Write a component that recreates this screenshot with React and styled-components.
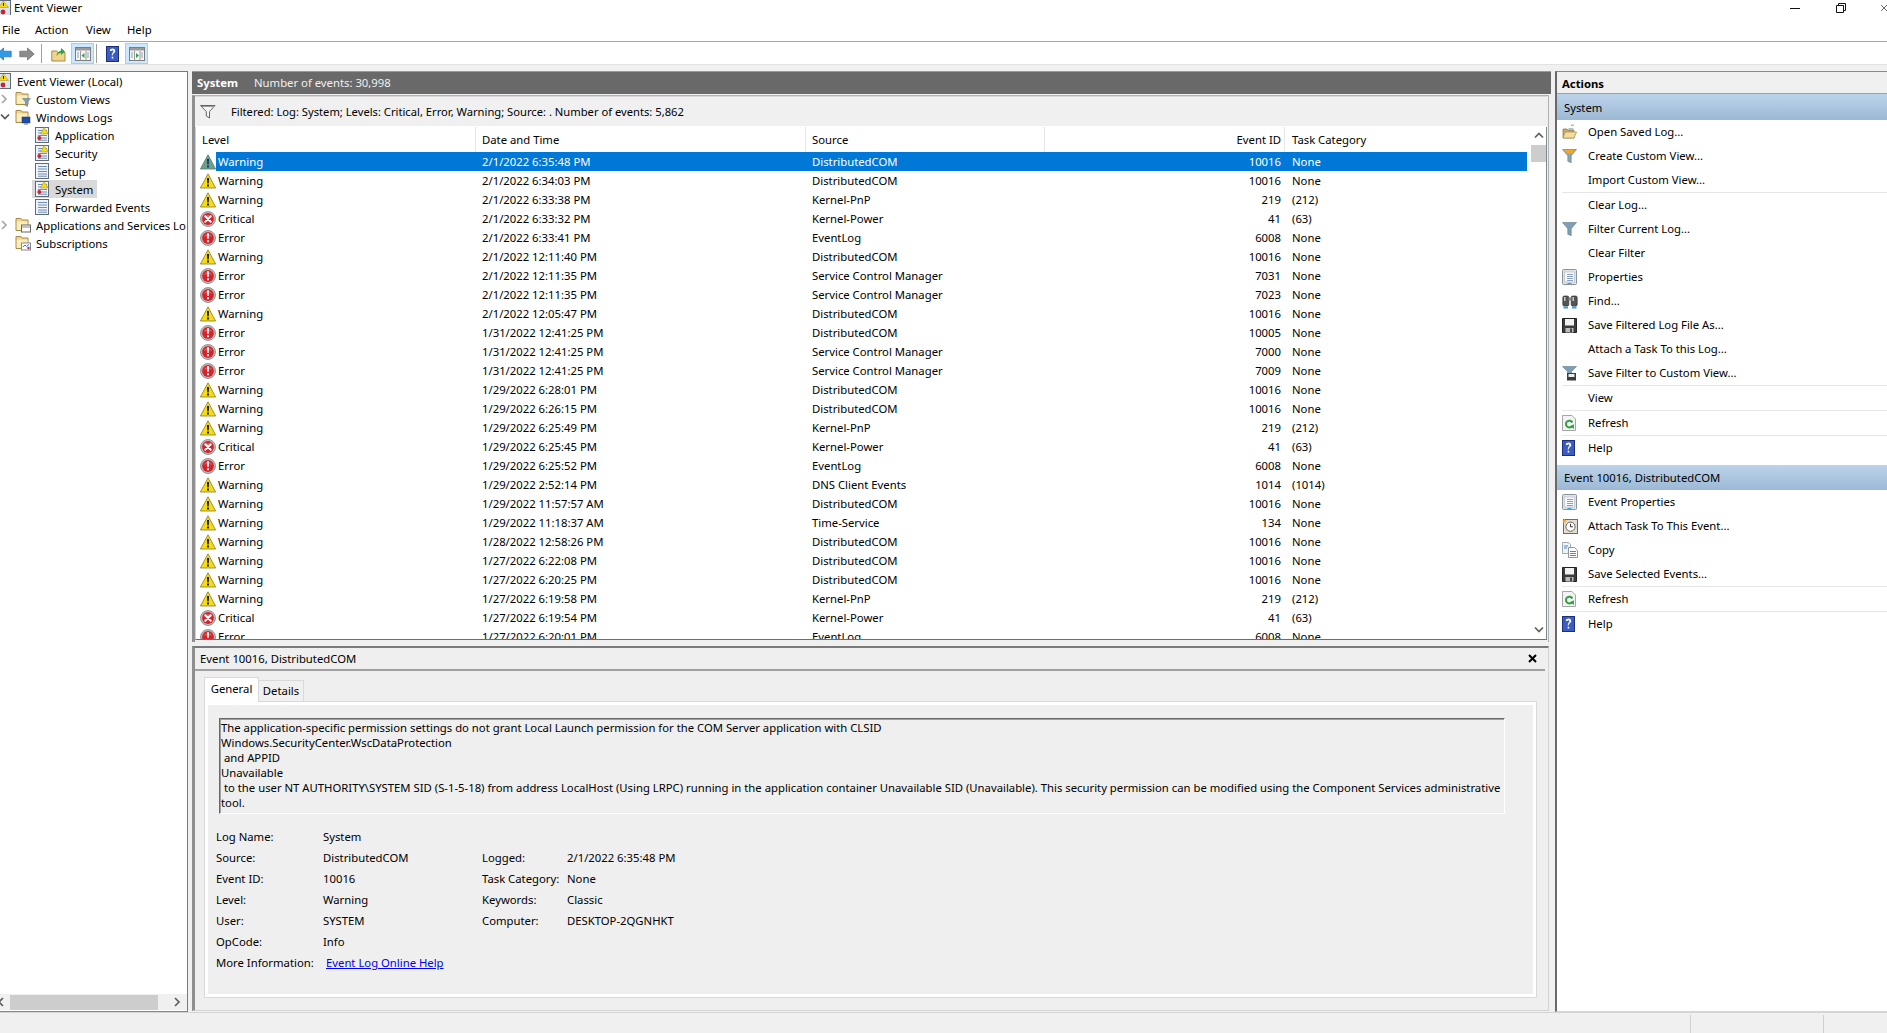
import React from 'react';
import styled, { createGlobalStyle } from 'styled-components';

const Global = createGlobalStyle`
  html, body { margin: 0; padding: 0; height: 100%; overflow: hidden; background: #f0f0f0; }
  #root { height: 100%; }
  * { box-sizing: border-box; }
  body { font-family: "Noto Sans", "Liberation Sans", sans-serif; font-size: 11.3px; color: #000; }
`;

const Frame = styled.div`display: flex; flex-direction: column; height: 1033px; width: 1887px; overflow: hidden; background: #f0f0f0;`;
const TitleBar = styled.div`height: 15px; background: #fff; display: flex; align-items: center; padding-left: 0; overflow: hidden;`;
const TitleIcon = styled.span`display: flex; width: 14px; flex: none; overflow: hidden; justify-content: flex-start;`;
const TitleText = styled.span`flex: 1;`;
const WinButtons = styled.div`display: flex; align-items: center; height: 15px;`;
const WinBtn = styled.span`display: flex; width: ${p => p.$w}px; justify-content: ${p => p.$start ? 'flex-start' : 'center'}; padding-left: ${p => p.$start ? 17 : 0}px; overflow: hidden;`;
const MenuBar = styled.div`height: 27px; background: #fff; border-bottom: 1px solid #a8a8a8; display: flex; align-items: center; padding: 2px 0 0 2px;`;
const MenuItem = styled.span`width: ${p => p.$w}px;`;
const Toolbar = styled.div`height: 23px; background: #fff; border-bottom: 1px solid #e2e2e2; display: flex; align-items: center; padding-top: 1px;`;
const ToolIcon = styled.span`display: flex; align-items: center; justify-content: center; flex: none; width: ${p => p.$w}px; height: 21px; margin-left: ${p => p.$ml || 0}px;
  ${p => p.$on ? 'background:#cce8ff; border:1px solid #99d1ff;' : ''}`;
const ToolSep = styled.span`width: 1px; height: 19px; background: #a0a0a0; flex: none; margin-left: ${p => p.$ml}px;`;
const Workspace = styled.div`flex: 1; min-height: 0; display: flex; padding-top: 6px;`;
const StatusBar = styled.div`height: 21px; border-top: 1px solid #d4d4d4; background: #f0f0f0; display: flex; padding-top: 2px; padding-left: 1690px;`;
const StatusCell = styled.div`width: ${p => p.$w}px; border-left: 1px solid #d0d0d0;`;

const LeftPane = styled.div`width: 188px; flex: none; background: #fff; display: flex; flex-direction: column; border-top: 1px solid #7a7a7a; border-right: 1px solid #7a7a7a; border-bottom: 1px solid #7f8a8f;`;
const Tree = styled.div`flex: 1; overflow: hidden;`;
const TreeRow = styled.div`height: 18px; display: flex; align-items: center; white-space: nowrap; padding-left: ${p => p.$pad}px;`;
const Arrow = styled.span`width: 15px; flex: none; display: flex; align-items: center;`;
const TreeIcon = styled.span`display: flex; flex: none; width: ${p => p.$w || 18}px;`;
const SelectedGroup = styled.span`display: flex; align-items: center; height: 18px; padding-left: 3px; padding-right: 4px; margin-left: -3px; ${p => p.$sel ? 'background:#d9d9d9;' : ''}`;
const HScroll = styled.div`height: 16px; margin-bottom: 1px; flex: none; background: #f0f0f0; display: flex; align-items: center;`;
const HThumb = styled.div`width: 148px; height: 15px; background: #cdcdcd; flex: none;`;
const HArrow = styled.span`display: flex; flex: ${p => p.$grow ? 1 : 'none'}; width: ${p => p.$w}px; overflow: hidden; justify-content: ${p => p.$grow ? 'flex-end' : 'flex-start'}; padding-right: ${p => p.$grow ? 4 : 0}px;`;
const HLeftChevron = styled.span`display: flex; margin-left: -3px;`;

const Center = styled.div`width: 1359px; flex: none; margin-left: 4px; display: flex; flex-direction: column;`;
const CenterHead = styled.div`height: 23px; background: #696969; color: #fff; display: flex; align-items: center; padding: 0 0 2px 5px; border-top: 1px solid #9a9a9a; flex: none;`;
const HeadName = styled.b`width: 57px; font-weight: 700;`;
const HeadCount = styled.span`color: #f0f0f0;`;
const EventsPane = styled.div`margin-top: 1px; width: 1357px; height: 547px; border: 1px solid #b0b0b0; border-left: 3px solid #8f8f8f; border-bottom: none; display: flex; flex-direction: column; flex: none; padding-right: 1px;`;
const FilterBar = styled.div`height: 31px; flex: none; display: flex; align-items: center; background: #f0f0f0; padding: 0 0 1px 5px; border-top: 1px solid #d8d8d8; border-bottom: 1px solid #fff;`;
const FilterText = styled.span`margin-left: 15px; font-size: 11.2px;`;
const TableBox = styled.div`height: 513px; flex: none; background: #fff; border-right: 1px solid #7f8a8f; border-bottom: 1px solid #6e6e6e; border-left: 1px solid #d0d0d0; display: flex; overflow: hidden;`;
const TableMain = styled.div`flex: 1; min-width: 0; overflow: hidden;`;
const Grid = styled.div`display: grid; grid-template-columns: 280px 330px 239px 240px 1fr; height: ${p => p.$h}px; align-items: center;`;
const HeadCell = styled.div`height: 25px; display: flex; align-items: center; padding-left: ${p => p.$last ? 7 : 6}px; border-right: ${p => p.$last ? 'none' : '1px solid #e5e5e5'}; ${p => p.$right ? 'justify-content:flex-end; padding-right:3px;' : ''}`;
const Row = styled(Grid)`color: ${p => p.$sel ? '#fff' : '#000'};`;
const LevelCell = styled.div`display: flex; align-items: center; height: 19px; padding-left: 4px;`;
const LevelText = styled.span`flex: 1; height: 19px; line-height: 19px; padding-left: 2px; ${p => p.$sel ? 'background:#0078d7;' : ''}`;
const Cell = styled.div`height: 19px; line-height: 19px; padding-left: ${p => p.$last ? 7 : 6}px; white-space: nowrap; ${p => p.$right ? 'text-align:right; padding-right:4px;' : ''} ${p => p.$sel ? 'background:#0078d7;' : ''}`;
const VScroll = styled.div`width: 19px; flex: none; background: #fff; display: flex; flex-direction: column; align-items: flex-end; padding-left: 4px;`;
const VArrow = styled.div`height: ${p => p.$h}px; width: 15px; display: flex; align-items: center; justify-content: center;`;
const VThumb = styled.div`height: 17px; width: 15px; background: #cdcdcd;`;
const VSpacer = styled.div`flex: 1;`;

const Detail = styled.div`margin-top: 4px; width: 1357px; flex: 1; min-height: 0; margin-bottom: 1px; background: #efefef; border: 1px solid #d4d4d4; border-top: 2px solid #7a7a7a; border-left: 3px solid #8f8f8f; display: flex; flex-direction: column; padding: 0 3px 0 0;`;
const DetailTitle = styled.div`height: 23px; flex: none; display: flex; align-items: center; justify-content: space-between; padding: 0 8px 0 5px; border-bottom: 2px solid #a0a0a0;`;
const Tabs = styled.div`display: flex; align-items: flex-end; height: 31px; padding-left: 9px; flex: none; position: relative; z-index: 1; margin-bottom: -1px;`;
const Tab = styled.div`display: flex; align-items: center; justify-content: center; width: ${p => p.$w}px; height: ${p => p.$on ? 25 : 22}px; border: 1px solid #d9d9d9; ${p => p.$on ? 'border-bottom:none; background:#fff; padding-bottom:4px;' : 'border-left:none; background:#f0f0f0; padding-bottom:1px;'}`;
const TabPanel = styled.div`margin: 0 8px 12px 9px; flex: 1; min-height: 0; border: 1px solid #d9d9d9; background: #efefef; box-shadow: inset 0 0 0 3px #fff; padding: 16px 31px 0 14px;`;
const MessageBox = styled.div`height: 96px; border-top: 1px solid #696969; border-left: 1px solid #696969; border-right: 1px solid #fff; border-bottom: 1px solid #fff; padding: 1px 0 0 1px; line-height: 15px; box-shadow: inset 0 1px 0 #a0a0a0, inset 1px 0 0 #a0a0a0;`;
const MessageLine = styled.div`white-space: pre; height: 15px;`;
const InfoGrid = styled.div`margin: 12px 0 0 -3px; display: grid; grid-template-columns: 107px 159px 85px 1fr; grid-auto-rows: 21px; align-items: center;`;
const Link = styled.a`color: #0000ff; text-decoration: underline; margin-left: 3px;`;

const RightPane = styled.div`flex: 1; margin-left: 4px; border-left: 2px solid #696969; border-top: 1px solid #8a8a8a; border-bottom: 1px solid #d4d4d4; background: #fff; display: flex; flex-direction: column; min-width: 0;`;
const ActionsHead = styled.div`height: 22px; flex: none; background: #f0f0f0; border-bottom: 1px solid #a0a0a0; display: flex; align-items: center; padding: 2px 0 0 5px; font-weight: 700;`;
const Band = styled.div`height: ${p => p.$h}px; flex: none; display: flex; align-items: center; padding-left: 7px; background: linear-gradient(#bcd4ea, #9cb8d5); margin-top: ${p => p.$mt || 0}px;`;
const ActionRow = styled.div`height: 24px; flex: none; display: flex; align-items: center; padding-left: 5px;`;
const ActionIcon = styled.span`display: flex; width: 26px; flex: none;`;
const ActionLabel = styled.span`padding-bottom: 2px;`;
const ActionSep = styled.div`height: 1px; flex: none; margin-left: 5px; background: #e6e6e6;`;

const Warn = ({ sel }) => (
  <svg width="16" height="16" viewBox="0 0 16 16">
    <path d="M8 .8 15.6 15H.4z" fill={sel ? '#6f9e8a' : '#f7dc12'} stroke={sel ? '#4e7f70' : '#8a7a20'} strokeWidth=".8" strokeLinejoin="round" />
    <path d="M7 5h2l-.3 5.5H7.3zM7.1 11.6h1.8v1.8H7.1z" fill={sel ? '#0a3566' : '#111'} />
  </svg>
);
const Circle = ({ children }) => (
  <svg width="16" height="16" viewBox="0 0 16 16">
    <circle cx="8" cy="8" r="7.5" fill="#bdbdbd" stroke="#777" strokeWidth=".7" />
    <circle cx="8" cy="8" r="5.9" fill="#d3242b" />
    <path d="M3.5 6.5A5 5 0 0 1 12.5 6.5z" fill="#e8686c" opacity=".7" />
    {children}
  </svg>
);
const Crit = () => <Circle><path d="M5.3 5.3l5.4 5.4M10.7 5.3l-5.4 5.4" stroke="#fff" strokeWidth="2" strokeLinecap="round" /></Circle>;
const Err = () => <Circle><path d="M7 3.3h2L8.7 9H7.3zM7.1 10.3h1.8v1.9H7.1z" fill="#fff" /></Circle>;
const LevelIcon = ({ level, sel }) => level === 'Warning' ? <Warn sel={sel} /> : level === 'Critical' ? <Crit /> : <Err />;

const Sheet = ({ alert }) => (
  <svg width="15" height="16" viewBox="0 0 15 16">
    <rect x=".5" y=".5" width="13" height="15" fill="#eef3fa" stroke="#5f6b7a" />
    <path d="M3 3.5h9M3 6h9M3 8.5h9M3 11h9M3 13.2h9" stroke="#6f8db5" />
    {alert && <><path d="M9 .5l4.5 6.5h-8z" fill="#f7dc12" stroke="#a08a10" strokeWidth=".5" /><circle cx="4.3" cy="11" r="2" fill="#c8262c" /></>}
  </svg>
);
const FolderBase = ({ children }) => (
  <svg width="16" height="16" viewBox="0 0 16 16">
    <path d="M1 1.5h5l1 1.5h6v10.5H1z" fill="#f0d48a" stroke="#a68a4a" />
    <path d="M1.8 4.5h10.6v8.3H1.8z" fill="#fbeebd" />
    {children}
  </svg>
);
const FolderFilter = () => <FolderBase><path d="M7.5 7.5h8l-3 3.4V15.5l-2-1v-3.6z" fill="#7f9fb5" stroke="#55727f" strokeWidth=".5" /></FolderBase>;
const FolderLogs = () => <FolderBase><rect x="7" y="8" width="8" height="6" fill="#1b4fb4" stroke="#333" strokeWidth=".5" /><path d="M9 14.5h4v1H9z" fill="#777" /></FolderBase>;
const FolderWin = () => <FolderBase><rect x="6.5" y="8" width="9" height="7" fill="#fff" stroke="#666" /><path d="M6.5 10h9" stroke="#888" /></FolderBase>;
const FolderSub = () => <FolderBase><rect x="6.5" y="8" width="9" height="7" fill="#fff" stroke="#889" /><path d="M8 12l2-2 1.5 1.5L14 9.5" stroke="#3a78c8" fill="none" /><circle cx="13.5" cy="13" r="1.2" fill="#c8262c" /></FolderBase>;
const LogRoot = () => (
  <svg width="11" height="16" viewBox="4 0 11 16">
    <rect x=".5" y=".5" width="14" height="15" fill="#dbe5f1" stroke="#5f6b7a" />
    <path d="M7.5 1l5 6.5h-10z" fill="#f7dc12" stroke="#a08a10" strokeWidth=".5" />
    <path d="M7 3h1v3H7z" fill="#222" />
    <circle cx="7" cy="12" r="2.4" fill="#c8262c" />
  </svg>
);
const Chevron = ({ dir, color = '#a6a6a6' }) => {
  const d = { right: 'M2 1l4 4-4 4', down: 'M1 2.5l4 4 4-4', left: 'M6 1L2 5l4 4', up: 'M1 6.5l4-4 4 4' }[dir];
  return <svg width="10" height="10" viewBox="0 0 10 10"><path d={d} fill="none" stroke={color} strokeWidth="1.7" /></svg>;
};
const HelpIcon = () => (
  <svg width="13" height="16" viewBox="0 0 13 16">
    <rect x=".5" y=".5" width="12" height="15" fill="#3a5cc4" stroke="#1b2f7a" />
    <path d="M3.8 5c0-3.2 5.4-3.2 5.4 0 0 2-2.3 2-2.5 4.4H5.8C5.8 6.5 7.4 6.5 7.4 5c0-1-1.9-1-2 0zM5.7 10.8h1.6v1.8H5.7z" fill="#fff" />
  </svg>
);
const Funnel = ({ fill = '#7e9fb5', top }) => (
  <svg width="16" height="16" viewBox="0 0 16 16">
    <path d="M.5 1.5h14l-5.3 6.2v7l-3.4-1.5V7.7z" fill={fill} stroke="#617a88" strokeWidth=".6" />
    {top && <path d="M2 2h11l-3 3.5H5z" fill={top} />}
  </svg>
);
const FilterOutline = () => (
  <svg width="16" height="16" viewBox="0 0 16 16">
    <path d="M.5 2.5h14.5L9.5 8.5v6.5l-3.2-2V8.5z" fill="#f6f6f6" stroke="#555" strokeWidth=".9" />
    <path d="M2 3.5h11" stroke="#999" />
  </svg>
);
const Binoculars = () => (
  <svg width="16" height="16" viewBox="0 0 16 16">
    <rect x=".8" y="3" width="6" height="10" rx="1.5" fill="#555" stroke="#222" strokeWidth=".6" />
    <rect x="9.2" y="3" width="6" height="10" rx="1.5" fill="#555" stroke="#222" strokeWidth=".6" />
    <rect x="6.5" y="4.5" width="3" height="3" fill="#888" />
    <path d="M1.5 13.5h4.5v2H1.5zM10 13.5h4.5v2H10z" fill="#3f9ae0" />
    <path d="M2 4h1.5v4H2zM10.5 4H12v4h-1.5z" fill="#c8c8c8" />
  </svg>
);
const Floppy = () => (
  <svg width="15" height="16" viewBox="0 0 15 16">
    <path d="M.5 1.5h14v14H.5z" fill="#3c3c3c" stroke="#222" />
    <rect x="3" y="2" width="9" height="6.5" fill="#f2f2f2" />
    <rect x="3.5" y="11" width="8" height="4.5" fill="#bdbdbd" />
    <rect x="8" y="11.5" width="2" height="3.5" fill="#444" />
  </svg>
);
const SaveFilter = () => (
  <svg width="16" height="16" viewBox="0 0 16 16">
    <path d="M.5 1.5h14l-5 5v3H5.5v-3z" fill="#7e9fb5" stroke="#617a88" strokeWidth=".6" />
    <path d="M5 8h9v7.5H5z" fill="#3c3c3c" />
    <rect x="6.5" y="9" width="6" height="3" fill="#eee" />
  </svg>
);
const Props = () => (
  <svg width="15" height="16" viewBox="0 0 15 16">
    <rect x=".5" y=".5" width="14" height="15" rx="1" fill="#dde3ea" stroke="#8b939c" />
    <rect x="2.5" y="3" width="10" height="10" fill="#f7f8fa" stroke="#b0b8c0" strokeWidth=".6" />
    <path d="M5 5.5h6M5 7.5h6M5 9.5h6M5 11.5h6" stroke="#8aa3c4" />
    <path d="M5.5 14.5h4" stroke="#3fa5e0" strokeWidth="1.2" />
  </svg>
);
const Refresh = () => (
  <svg width="14" height="16" viewBox="0 0 14 16">
    <path d="M.5.5H10l3.5 3.5v11.5H.5z" fill="#f3f3f3" stroke="#a5a5a5" />
    <path d="M10 11.2A3.4 3.4 0 1 1 10.4 7.5" fill="none" stroke="#2f9e3f" strokeWidth="2" />
    <path d="M7.8 11.5l4.2 2.2-.2-4.5z" fill="#2f9e3f" />
  </svg>
);
const OpenLog = () => (
  <svg width="15" height="16" viewBox="0 0 15 16">
    <path d="M1 5h4l1 1.3h6V14H1z" fill="#cdaa64" stroke="#8a7038" strokeWidth=".7" />
    <path d="M3 8h11.5L12 14H1z" fill="#f2dc9e" stroke="#a68a4a" strokeWidth=".7" />
    <path d="M9 1.2h3" stroke="#4fd04f" />
    <path d="M6.5 5h5" stroke="#7fa8cf" strokeWidth="1.4" />
  </svg>
);
const Task = () => (
  <svg width="16" height="16" viewBox="0 0 16 16">
    <rect x="1.5" y="1.5" width="14" height="14" fill="#e6ddd0" stroke="#7a6a55" />
    <circle cx="8.5" cy="8.7" r="4.6" fill="#fff" stroke="#66645e" />
    <path d="M8.5 5.8v3h2.4" fill="none" stroke="#333" />
    <path d="M2.5.5l.7 1.5 1.6.2-1.2 1.1.3 1.6-1.4-.8-1.4.8.3-1.6L.2 2.2l1.6-.2z" fill="#f5a623" />
  </svg>
);
const Copy = () => (
  <svg width="16" height="16" viewBox="0 0 16 16">
    <path d="M.5.5h6l2 2v9h-8z" fill="#eef3fa" stroke="#a0a8b4" />
    <path d="M6.5 5.5h6l3 3v7h-9z" fill="#fff" stroke="#8c96a3" />
    <path d="M8 9.5h6M8 11.5h6M8 13.5h6M2 4h4M2 6h3" stroke="#4f86c6" />
  </svg>
);
const NavArrow = ({ color, stroke, flip }) => (
  <svg width="16" height="14" viewBox="0 0 16 14" style={flip ? { transform: 'scaleX(-1)' } : undefined}>
    <path d="M.8 7 7.5 1v3.2h7.7v5.6H7.5V13z" fill={color} stroke={stroke} strokeWidth=".7" />
  </svg>
);
const PaneIcon = ({ flip }) => (
  <svg width="16" height="14" viewBox="0 0 16 14">
    <rect x=".5" y=".5" width="15" height="13" fill="#f5f5f5" stroke="#7d7d7d" />
    <path d="M1 1h14v2.5H1z" fill="#9a9a9a" />
    <path d="M5.5 4v9.5M11 4v9.5" stroke="#9a9a9a" />
    <path d="M2 6h2M2 8h2M2 10h2M12 6h2M12 8h2M12 10h2" stroke="#8aa0b8" />
    <path d={flip ? 'M7 6l3 2.5L7 11z' : 'M9.5 6l-3 2.5 3 2.5z'} fill="#22a84a" />
  </svg>
);
const UpFolder = () => (
  <svg width="15" height="16" viewBox="0 0 15 16">
    <path d="M.8 5h5l1 1.5H14V15H.8z" fill="#f0d48a" stroke="#a68a4a" />
    <path d="M5 10c1-3 3-5 5-5.5V2l4 3.5L10 9V6.8C8 7.5 6.5 8.5 5 10z" fill="#2fa24a" />
  </svg>
);

const rows = [
  ['Warning','2/1/2022 6:35:48 PM','DistributedCOM','10016','None'],
  ['Warning','2/1/2022 6:34:03 PM','DistributedCOM','10016','None'],
  ['Warning','2/1/2022 6:33:38 PM','Kernel-PnP','219','(212)'],
  ['Critical','2/1/2022 6:33:32 PM','Kernel-Power','41','(63)'],
  ['Error','2/1/2022 6:33:41 PM','EventLog','6008','None'],
  ['Warning','2/1/2022 12:11:40 PM','DistributedCOM','10016','None'],
  ['Error','2/1/2022 12:11:35 PM','Service Control Manager','7031','None'],
  ['Error','2/1/2022 12:11:35 PM','Service Control Manager','7023','None'],
  ['Warning','2/1/2022 12:05:47 PM','DistributedCOM','10016','None'],
  ['Error','1/31/2022 12:41:25 PM','DistributedCOM','10005','None'],
  ['Error','1/31/2022 12:41:25 PM','Service Control Manager','7000','None'],
  ['Error','1/31/2022 12:41:25 PM','Service Control Manager','7009','None'],
  ['Warning','1/29/2022 6:28:01 PM','DistributedCOM','10016','None'],
  ['Warning','1/29/2022 6:26:15 PM','DistributedCOM','10016','None'],
  ['Warning','1/29/2022 6:25:49 PM','Kernel-PnP','219','(212)'],
  ['Critical','1/29/2022 6:25:45 PM','Kernel-Power','41','(63)'],
  ['Error','1/29/2022 6:25:52 PM','EventLog','6008','None'],
  ['Warning','1/29/2022 2:52:14 PM','DNS Client Events','1014','(1014)'],
  ['Warning','1/29/2022 11:57:57 AM','DistributedCOM','10016','None'],
  ['Warning','1/29/2022 11:18:37 AM','Time-Service','134','None'],
  ['Warning','1/28/2022 12:58:26 PM','DistributedCOM','10016','None'],
  ['Warning','1/27/2022 6:22:08 PM','DistributedCOM','10016','None'],
  ['Warning','1/27/2022 6:20:25 PM','DistributedCOM','10016','None'],
  ['Warning','1/27/2022 6:19:58 PM','Kernel-PnP','219','(212)'],
  ['Critical','1/27/2022 6:19:54 PM','Kernel-Power','41','(63)'],
  ['Error','1/27/2022 6:20:01 PM','EventLog','6008','None'],
];

const systemActions = [
  ['Open Saved Log...', <OpenLog />], ['Create Custom View...', <Funnel fill="#8fa4b0" top="#f5a623" />], ['Import Custom View...'], 'sep',
  ['Clear Log...'], ['Filter Current Log...', <Funnel />], ['Clear Filter'], ['Properties', <Props />], ['Find...', <Binoculars />],
  ['Save Filtered Log File As...', <Floppy />], ['Attach a Task To this Log...'], ['Save Filter to Custom View...', <SaveFilter />], 'sep',
  ['View'], 'sep', ['Refresh', <Refresh />], 'sep', ['Help', <HelpIcon />],
];
const eventActions = [
  ['Event Properties', <Props />], ['Attach Task To This Event...', <Task />], ['Copy', <Copy />], ['Save Selected Events...', <Floppy />], 'sep',
  ['Refresh', <Refresh />], 'sep', ['Help', <HelpIcon />],
];
const ActionList = ({ items }) => items.map((a, i) => a === 'sep'
  ? <ActionSep key={i} />
  : <ActionRow key={i}><ActionIcon>{a[1]}</ActionIcon><ActionLabel>{a[0]}</ActionLabel></ActionRow>);

const message = [
  'The application-specific permission settings do not grant Local Launch permission for the COM Server application with CLSID',
  'Windows.SecurityCenter.WscDataProtection',
  ' and APPID',
  'Unavailable',
  ' to the user NT AUTHORITY\\SYSTEM SID (S-1-5-18) from address LocalHost (Using LRPC) running in the application container Unavailable SID (Unavailable). This security permission can be modified using the Component Services administrative',
  'tool.',
];

export default function App() {
  return (
    <Frame>
      <Global />
      <TitleBar>
        <TitleIcon><LogRoot /></TitleIcon>
        <TitleText>Event Viewer</TitleText>
        <WinButtons>
          <WinBtn $w={46}><svg width="10" height="10" viewBox="0 0 10 10"><path d="M0 5.5h10" stroke="#111" /></svg></WinBtn>
          <WinBtn $w={46}><svg width="10" height="10" viewBox="0 0 10 10"><path d="M.5 2.5h7v7h-7zM2.5 2.5v-2h7v7h-2" fill="none" stroke="#111" /></svg></WinBtn>
          <WinBtn $w={23} $start><svg width="10" height="10" viewBox="0 0 10 10"><path d="M0 0l10 10M10 0L0 10" stroke="#111" /></svg></WinBtn>
        </WinButtons>
      </TitleBar>
      <MenuBar>
        <MenuItem $w={33}>File</MenuItem><MenuItem $w={51}>Action</MenuItem><MenuItem $w={41}>View</MenuItem><MenuItem $w={40}>Help</MenuItem>
      </MenuBar>
      <Toolbar>
        <ToolIcon $w={12}><svg width="12" height="14" viewBox="4 0 12 14"><path d="M.8 7 7.5 1v3.2h7.7v5.6H7.5V13z" fill="#2f9be8" stroke="#1d6fb5" strokeWidth=".7" /></svg></ToolIcon>
        <ToolIcon $w={16} $ml={7}><NavArrow color="#8c8c8c" stroke="#6a6a6a" flip /></ToolIcon>
        <ToolSep $ml={6} />
        <ToolIcon $w={15} $ml={9}><UpFolder /></ToolIcon>
        <ToolIcon $w={23} $ml={5} $on><PaneIcon /></ToolIcon>
        <ToolSep $ml={2} />
        <ToolIcon $w={13} $ml={9}><HelpIcon /></ToolIcon>
        <ToolIcon $w={23} $ml={6} $on><PaneIcon flip /></ToolIcon>
      </Toolbar>
      <Workspace>
        <LeftPane>
          <Tree>
            <TreeRow $pad={0}><TreeIcon $w={17}><LogRoot /></TreeIcon><span>Event Viewer (Local)</span></TreeRow>
            <TreeRow $pad={0}><Arrow><Chevron dir="right" /></Arrow><TreeIcon $w={21}><FolderFilter /></TreeIcon><span>Custom Views</span></TreeRow>
            <TreeRow $pad={0}><Arrow><Chevron dir="down" color="#555" /></Arrow><TreeIcon $w={21}><FolderLogs /></TreeIcon><span>Windows Logs</span></TreeRow>
            {[['Application', true], ['Security', true], ['Setup', false], ['System', true], ['Forwarded Events', false]].map(([n, a]) => (
              <TreeRow $pad={35} key={n}>
                <SelectedGroup $sel={n === 'System'}><TreeIcon $w={20}><Sheet alert={a} /></TreeIcon><span>{n}</span></SelectedGroup>
              </TreeRow>
            ))}
            <TreeRow $pad={0}><Arrow><Chevron dir="right" /></Arrow><TreeIcon $w={21}><FolderWin /></TreeIcon><span>Applications and Services Lo</span></TreeRow>
            <TreeRow $pad={15}><TreeIcon $w={21}><FolderSub /></TreeIcon><span>Subscriptions</span></TreeRow>
          </Tree>
          <HScroll>
            <HArrow $w={10}><HLeftChevron><Chevron dir="left" color="#606060" /></HLeftChevron></HArrow>
            <HThumb />
            <HArrow $grow><Chevron dir="right" color="#606060" /></HArrow>
          </HScroll>
        </LeftPane>
        <Center>
          <CenterHead><HeadName>System</HeadName><HeadCount>Number of events: 30,998</HeadCount></CenterHead>
          <EventsPane>
            <FilterBar>
              <FilterOutline />
              <FilterText>Filtered: Log: System; Levels: Critical, Error, Warning; Source: . Number of events: 5,862</FilterText>
            </FilterBar>
            <TableBox>
              <TableMain>
                <Grid $h={25}>
                  <HeadCell>Level</HeadCell><HeadCell>Date and Time</HeadCell><HeadCell>Source</HeadCell>
                  <HeadCell $right>Event ID</HeadCell><HeadCell $last>Task Category</HeadCell>
                </Grid>
                {rows.map((r, i) => {
                  const sel = i === 0;
                  return (
                    <Row $h={19} $sel={sel} key={i}>
                      <LevelCell><LevelIcon level={r[0]} sel={sel} /><LevelText $sel={sel}>{r[0]}</LevelText></LevelCell>
                      <Cell $sel={sel}>{r[1]}</Cell><Cell $sel={sel}>{r[2]}</Cell>
                      <Cell $sel={sel} $right>{r[3]}</Cell><Cell $sel={sel} $last>{r[4]}</Cell>
                    </Row>
                  );
                })}
              </TableMain>
              <VScroll>
                <VArrow $h={18}><Chevron dir="up" color="#606060" /></VArrow>
                <VThumb />
                <VSpacer />
                <VArrow $h={18}><Chevron dir="down" color="#606060" /></VArrow>
              </VScroll>
            </TableBox>
          </EventsPane>
          <Detail>
            <DetailTitle>
              <span>Event 10016, DistributedCOM</span>
              <svg width="9" height="9" viewBox="0 0 9 9"><path d="M1 1l7 7M8 1L1 8" stroke="#000" strokeWidth="2" /></svg>
            </DetailTitle>
            <Tabs><Tab $on $w={55}>General</Tab><Tab $w={45}>Details</Tab></Tabs>
            <TabPanel>
              <MessageBox>{message.map((m, i) => <MessageLine key={i}>{m}</MessageLine>)}</MessageBox>
              <InfoGrid>
                <span>Log Name:</span><span>System</span><span /><span />
                <span>Source:</span><span>DistributedCOM</span><span>Logged:</span><span>2/1/2022 6:35:48 PM</span>
                <span>Event ID:</span><span>10016</span><span>Task Category:</span><span>None</span>
                <span>Level:</span><span>Warning</span><span>Keywords:</span><span>Classic</span>
                <span>User:</span><span>SYSTEM</span><span>Computer:</span><span>DESKTOP-2QGNHKT</span>
                <span>OpCode:</span><span>Info</span><span /><span />
                <span>More Information:</span><span><Link href="#">Event Log Online Help</Link></span><span /><span />
              </InfoGrid>
            </TabPanel>
          </Detail>
        </Center>
        <RightPane>
          <ActionsHead>Actions</ActionsHead>
          <Band $h={26}>System</Band>
          <ActionList items={systemActions} />
          <Band $h={25} $mt={5}>Event 10016, DistributedCOM</Band>
          <ActionList items={eventActions} />
        </RightPane>
      </Workspace>
      <StatusBar><StatusCell $w={133} /><StatusCell $w={64} /></StatusBar>
    </Frame>
  );
}
